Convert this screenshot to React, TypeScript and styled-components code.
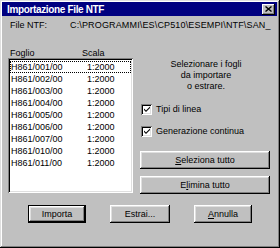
import React from "react";
import styled, { createGlobalStyle } from "styled-components";

const GlobalStyle = createGlobalStyle`
  html, body {
    margin: 0;
    padding: 0;
    background: #c0c0c0;
  }
  body {
    font-family: "Liberation Sans", Arial, sans-serif;
    font-size: 9px;
    color: #000;
  }
`;

const Window = styled.div`
  width: 280px;
  height: 248px;
  box-sizing: border-box;
  padding: 2px 3px 3px 2px;
  background: #c0c0c0;
  box-shadow: inset -1px -1px #000, inset 1px 1px #dfdfdf,
    inset -2px -2px #808080, inset 2px 2px #fff;
  display: flex;
  flex-direction: column;
`;

const TitleBar = styled.div`
  height: 14px;
  background: #000080;
  color: #fff;
  display: flex;
  align-items: center;
  justify-content: space-between;
  padding: 0 2px 0 5px;
`;

const Title = styled.span`
  font-weight: bold;
  font-size: 10px;
  letter-spacing: -0.35px;
`;

const CloseButton = styled.div`
  width: 13px;
  height: 11px;
  background: #c0c0c0;
  box-shadow: inset -1px -1px #000, inset 1px 1px #fff,
    inset -2px -2px #808080;
  display: flex;
  align-items: center;
  justify-content: center;
`;

const Body = styled.div`
  flex: 1;
  display: flex;
  flex-direction: column;
  padding: 4px 0 0 6px;
`;

const FileRow = styled.div`
  display: grid;
  grid-template-columns: 60px 1fr;
  line-height: 11px;
  padding-left: 2px;
  white-space: nowrap;
  overflow: hidden;
`;

const Path = styled.span`
  letter-spacing: 0.15px;
`;

const Main = styled.div`
  display: flex;
  margin-top: 17px;
`;

const LeftCol = styled.div`
  width: 125px;
  display: flex;
  flex-direction: column;
`;

const Headers = styled.div`
  display: grid;
  grid-template-columns: 72px 1fr;
  padding-left: 2px;
  line-height: 10px;
  height: 10px;
`;

const ListBox = styled.div`
  height: 135px;
  background: #fff;
  box-sizing: border-box;
  padding: 3px 2px 2px 2px;
  box-shadow: inset 1px 1px #808080, inset -1px -1px #fff,
    inset 2px 2px #000, inset -2px -2px #dfdfdf;
`;

const ListRow = styled.div<{ $focus?: boolean }>`
  display: grid;
  grid-template-columns: 76px 1fr;
  height: 12px;
  line-height: 12px;
  box-sizing: border-box;
  padding-left: 1px;
  outline: ${(p) => (p.$focus ? "1px dotted #000" : "none")};
  outline-offset: -1px;
`;

const RightCol = styled.div`
  width: 130px;
  margin-left: 7px;
  display: flex;
  flex-direction: column;
`;

const Hint = styled.div`
  text-align: center;
  line-height: 11px;
  margin-top: 11px;
  padding-left: 2px;
`;

const CheckRow = styled.label<{ $first?: boolean }>`
  display: flex;
  align-items: center;
  gap: 4px;
  height: 12px;
  margin-top: ${(p) => (p.$first ? "11px" : "10px")};
  padding-left: 1px;
`;

const CheckBox = styled.span`
  width: 11px;
  height: 11px;
  background: #fff;
  box-sizing: border-box;
  box-shadow: inset 1px 1px #808080, inset -1px -1px #fff,
    inset 2px 2px #000, inset -2px -2px #dfdfdf;
  display: flex;
  align-items: center;
  justify-content: center;
`;

const Button = styled.div<{ $default?: boolean; $width?: number }>`
  width: ${(p) => (p.$width ? `${p.$width}px` : "auto")};
  height: 18px;
  box-sizing: border-box;
  display: flex;
  align-items: center;
  justify-content: center;
  background: #c0c0c0;
  border: ${(p) => (p.$default ? "1px solid #000" : "none")};
  box-shadow: inset -1px -1px #000, inset 1px 1px #fff,
    inset -2px -2px #808080, inset 2px 2px #dfdfdf;
  u {
    text-decoration: underline;
    text-underline-offset: 1px;
  }
`;

const TopButton = styled(Button)`
  margin-top: 14px;
`;

const WideButton = styled(Button)`
  margin-top: 7px;
`;

const BottomRow = styled.div`
  display: flex;
  gap: 24px;
  margin-top: 11px;
  padding-left: 20px;
`;

const rows = ["001", "002", "003", "004", "005", "006", "007", "010", "011"];

const Check = () => (
  <svg width="8" height="8" viewBox="0 0 8 8">
    <path d="M1 3.5 L3 5.5 L7 1.5 L7 3 L3 7 L1 5 Z" fill="#000" />
  </svg>
);

const App = () => {
  return (
    <>
      <GlobalStyle />
      <Window>
        <TitleBar>
          <Title>Importazione File NTF</Title>
          <CloseButton>
            <svg width="7" height="6" viewBox="0 0 7 6">
              <path d="M0.5 0.5 L6.5 5.5 M6.5 0.5 L0.5 5.5" stroke="#000" strokeWidth="1.4" />
            </svg>
          </CloseButton>
        </TitleBar>
        <Body>
          <FileRow>
            <span>File NTF:</span>
            <Path>C:\PROGRAMMI\ES\CP510\ESEMPI\NTF\SAN_</Path>
          </FileRow>
          <Main>
            <LeftCol>
              <Headers>
                <span>Foglio</span>
                <span>Scala</span>
              </Headers>
              <ListBox>
                {rows.map((r, i) => (
                  <ListRow key={r} $focus={i === 0}>
                    <span>H861/{r}/00</span>
                    <span>1:2000</span>
                  </ListRow>
                ))}
              </ListBox>
            </LeftCol>
            <RightCol>
              <Hint>
                Selezionare i fogli
                <br />
                da importare
                <br />o estrare.
              </Hint>
              <CheckRow $first>
                <CheckBox>
                  <Check />
                </CheckBox>
                Tipi di linea
              </CheckRow>
              <CheckRow>
                <CheckBox>
                  <Check />
                </CheckBox>
                Generazione continua
              </CheckRow>
              <TopButton>
                <span>
                  <u>S</u>eleziona tutto
                </span>
              </TopButton>
              <WideButton>
                <span>
                  E<u>l</u>imina tutto
                </span>
              </WideButton>
            </RightCol>
          </Main>
          <BottomRow>
            <Button $default $width={58}>
              Importa
            </Button>
            <Button $width={60}>Estrai...</Button>
            <Button $width={58}>
              <span>
                <u>A</u>nnulla
              </span>
            </Button>
          </BottomRow>
        </Body>
      </Window>
    </>
  );
};

export default App;
